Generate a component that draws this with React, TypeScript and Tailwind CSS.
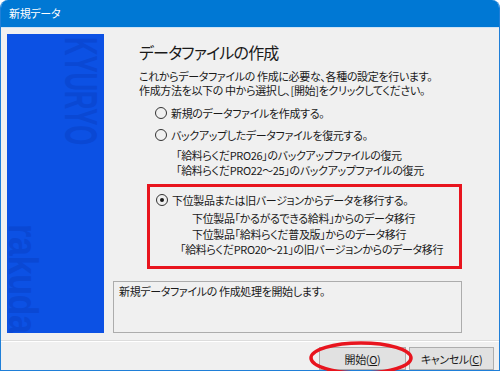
import React from "react";

const jp = "font-['Noto_Sans_CJK_JP','Noto_Sans',sans-serif] [font-feature-settings:'palt']";

function Radio({ checked }: { checked?: boolean }) {
  return (
    <span className="relative flex h-[12px] w-[12px] shrink-0 items-center justify-center rounded-full border border-[#333333] bg-[#f0f0f0]">
      {checked && <span className="h-[4px] w-[4px] rounded-full bg-[#1a1a1a]" />}
    </span>
  );
}

function Logo() {
  return (
    <svg width="97" height="299" viewBox="0 0 97 299" className="block">
      <rect x="0" y="0" width="97" height="299" fill="#0c51e4" />
      <text
        transform="translate(58,3) rotate(90) scale(0.56,1)"
        fontFamily="Liberation Sans, Arial, sans-serif"
        fontWeight="bold"
        fontSize="46"
        fill="#0a48d4"
      >
        KYURYO
      </text>
      <text
        transform="translate(2,190) rotate(90) scale(0.85,1)"
        fontFamily="Liberation Sans, Arial, sans-serif"
        fontWeight="bold"
        fontSize="40"
        fill="#0a48d4"
      >
        rakuda
      </text>
    </svg>
  );
}

export default function App() {
  return (
    <div className={`relative h-[371px] w-[500px] overflow-hidden bg-white ${jp}`}>
      <div className="flex h-[371px] w-[500px] flex-col overflow-hidden rounded-t-[8px] border-x border-b border-[#1f7fd8]">
        {/* title bar */}
        <div className="flex h-[27px] shrink-0 items-center bg-[#0078d4] pl-[8px] text-[11px] tracking-[-0.3px] text-white">
          新規データ
        </div>
        <div className="h-px shrink-0 bg-[#cfe3f5]" />
        {/* body */}
        <div className="flex flex-1 flex-col bg-[#f0f0f0] text-[11px] leading-[14px] tracking-[-0.35px] text-[#1a1a1a]">
          <div className="flex pl-[6px] pt-[6px]">
            <div className="h-[299px] w-[97px] shrink-0 overflow-hidden">
              <Logo />
            </div>
            <div className="ml-[9px] flex w-[349px] flex-col">
              <div className="mt-[8px] pl-[26px] text-[16px] leading-[20px] tracking-[-0.8px]">
                データファイルの作成
              </div>
              <div className="mt-[7px] pl-[26px]">
                <div>これからデータファイルの 作成に必要な、各種の設定を行います。</div>
                <div>作成方法を以下の 中から選択し、[開始]をクリックしてください。</div>
              </div>
              <div className="mt-[9px] flex items-center gap-[4px] pl-[42px]">
                <Radio />
                <span>新規のデータファイルを作成する。</span>
              </div>
              <div className="mt-[8px] flex items-center gap-[4px] pl-[42px]">
                <Radio />
                <span>バックアップしたデータファイルを復元する。</span>
              </div>
              <div className="mt-[6px] pl-[63px] leading-[15px]">
                <div>「給料らくだPRO26」のバックアップファイルの復元</div>
                <div>「給料らくだPRO22～25」のバックアップファイルの復元</div>
              </div>
              <div className="ml-[34px] mt-[6px] w-[315px] border-[3px] border-[#e8141e] pb-[8px] pt-[6px]">
                <div className="flex items-center gap-[4px] pl-[6px]">
                  <Radio checked />
                  <span>下位製品または旧バージョンからデータを移行する。</span>
                </div>
                <div className="mt-[4px] leading-[15.5px]">
                  <div className="pl-[42px]">下位製品「かるがるできる給料」からのデータ移行</div>
                  <div className="pl-[42px]">下位製品「給料らくだ普及版」からのデータ移行</div>
                  <div className="pl-[30px]">「給料らくだPRO20～21」の旧バージョンからのデータ移行</div>
                </div>
              </div>
              <div className="mt-[12px] h-[52px] border border-[#acacac] px-[5px] pt-[2px]">
                新規データファイルの 作成処理を開始します。
              </div>
            </div>
          </div>
          <div className="mt-[7px] h-px bg-[#dcdcdc]" />
          <div className="h-px bg-white" />
          <div className="flex justify-end gap-[3px] pr-[5px] pt-[5px]">
            <button className="flex h-[23px] w-[87px] items-center justify-center border border-[#adadad] bg-[#e1e1e1] text-[11px] tracking-[-0.35px] text-[#1a1a1a]">
              開始(<span className="underline">O</span>)
            </button>
            <button className="flex h-[23px] w-[85px] items-center justify-center border border-[#adadad] bg-[#e1e1e1] text-[11px] tracking-[-0.35px] text-[#1a1a1a]">
              キャンセル(<span className="underline">C</span>)
            </button>
          </div>
        </div>
      </div>
      <svg className="pointer-events-none absolute left-[308px] top-[340px]" width="110" height="40" viewBox="0 0 110 40">
        <ellipse cx="53" cy="18" rx="50" ry="15" fill="none" stroke="#e8141e" strokeWidth="3.5" />
      </svg>
    </div>
  );
}
